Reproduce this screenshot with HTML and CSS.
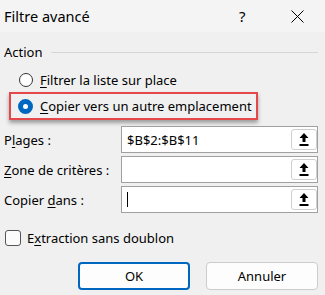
FILE: index.html
```html
<!DOCTYPE html>
<html lang="fr">
<head>
  <meta charset="UTF-8">
  <title>Filtre avancé</title>
  <link rel="stylesheet" href="styles.css">
</head>
<body>
  <div class="dialog">
    <div class="titlebar">
      <span class="title">Filtre avancé</span>
      <span class="help">?</span>
      <svg class="close" width="13" height="13" viewBox="0 0 13 13"><path d="M0.5 0.5 L12.5 12.5 M12.5 0.5 L0.5 12.5" stroke="#000" stroke-width="1"/></svg>
    </div>

    <div class="group-head">
      <span>Action</span>
      <div class="rule"></div>
    </div>

    <div class="radio-row">
      <span class="radio"></span>
      <span><u>F</u>iltrer la liste sur place</span>
    </div>
    <div class="radio-row highlight">
      <span class="radio checked"></span>
      <span><u>C</u>opier vers un autre emplacement</span>
    </div>

    <div class="fields">
      <label>P<u>l</u>ages :</label>
      <div class="ref-input"><span class="value">$B$2:$B$11</span><button class="pick"><svg width="10" height="13" viewBox="0 0 10 13"><path d="M5 0 L9.5 5 L6.5 5 L6.5 9 L3.5 9 L3.5 5 L0.5 5 Z" fill="#000"/><rect x="0.5" y="11" width="9" height="2" fill="#000"/></svg></button></div>

      <label><u>Z</u>one de critères :</label>
      <div class="ref-input"><span class="value"></span><button class="pick"><svg width="10" height="13" viewBox="0 0 10 13"><path d="M5 0 L9.5 5 L6.5 5 L6.5 9 L3.5 9 L3.5 5 L0.5 5 Z" fill="#000"/><rect x="0.5" y="11" width="9" height="2" fill="#000"/></svg></button></div>

      <label>Copier <u>d</u>ans :</label>
      <div class="ref-input"><span class="value"><span class="caret"></span></span><button class="pick"><svg width="10" height="13" viewBox="0 0 10 13"><path d="M5 0 L9.5 5 L6.5 5 L6.5 9 L3.5 9 L3.5 5 L0.5 5 Z" fill="#000"/><rect x="0.5" y="11" width="9" height="2" fill="#000"/></svg></button></div>
    </div>

    <div class="check-row">
      <span class="checkbox"></span>
      <span>E<u>x</u>traction sans doublon</span>
    </div>

    <div class="buttons">
      <button class="btn primary">OK</button>
      <button class="btn">Annuler</button>
    </div>
  </div>
</body>
</html>
```

FILE: styles.css
```css
body {
  margin: 0;
  background: #f0f0f0;
  font-family: "Noto Sans", "Open Sans", sans-serif;
  font-size: 13px;
  color: #000;
}
.dialog { width: 325px; height: 295px; overflow: hidden; }
u { text-decoration-thickness: 1px; text-underline-offset: 2px; }

.titlebar {
  height: 32px;
  background: #f4f4f4;
  display: flex;
  align-items: center;
}
.title { margin-left: 4px; font-size: 14.5px; flex: 1; }
.help { font-size: 15px; width: 52px; }
.close { margin-right: 21px; }

.group-head { display: flex; align-items: center; margin: 12px 7px 0 4px; height: 15px; }
.rule { flex: 1; height: 1px; background: #d6d6d6; margin-left: 8px; margin-top: 1px; }

.radio-row { display: flex; align-items: center; gap: 7px; height: 16px; margin: 13px 0 0 19px; }
.radio {
  width: 12px; height: 12px;
  border: 1px solid #333;
  border-radius: 50%;
  background: #fff;
}
.radio.checked {
  width: 5px; height: 5px;
  border: 5px solid #0067c0;
  background: #fff;
}
.highlight {
  margin: 4px 0 0 9px;
  width: 238px;
  height: 24px;
  padding-left: 7px;
  border: 2px solid #e6474b;
  box-shadow: 0 3px 4px rgba(0, 0, 0, 0.35);
  gap: 7px;
}

.fields {
  display: grid;
  grid-template-columns: 117px 197px;
  row-gap: 3px;
  margin: 6px 0 0 4px;
  align-items: center;
}
.fields label { font-size: 13px; }
.ref-input {
  height: 25px;
  background: #fff;
  border: 1px solid #a0a0a0;
  display: flex;
  align-items: center;
}
.ref-input .value { flex: 1; padding-left: 5px; font-size: 13px; display: flex; align-items: center; }
.caret { width: 1px; height: 15px; background: #000; }
.pick {
  width: 26px; height: 21px;
  margin-right: 0;
  padding: 0;
  background: #fff;
  border: 1px solid #cfcfcf;
  border-radius: 3px;
  display: flex;
  align-items: center;
  justify-content: center;
}

.check-row { display: flex; align-items: center; gap: 6px; margin: 17px 0 0 5px; height: 16px; }
.checkbox {
  width: 14px; height: 14px;
  border: 1px solid #555;
  border-radius: 3px;
  background: #fbfbfb;
}

.buttons { display: flex; justify-content: flex-end; gap: 16px; margin: 16px 7px 0 0; }
.btn {
  width: 112px; height: 28px;
  font-family: inherit;
  font-size: 13px;
  background: #fdfdfd;
  border: 1px solid #cccccc;
  border-radius: 4px;
  color: #000;
}
.btn.primary { border: 2px solid #0067c0; }
```
